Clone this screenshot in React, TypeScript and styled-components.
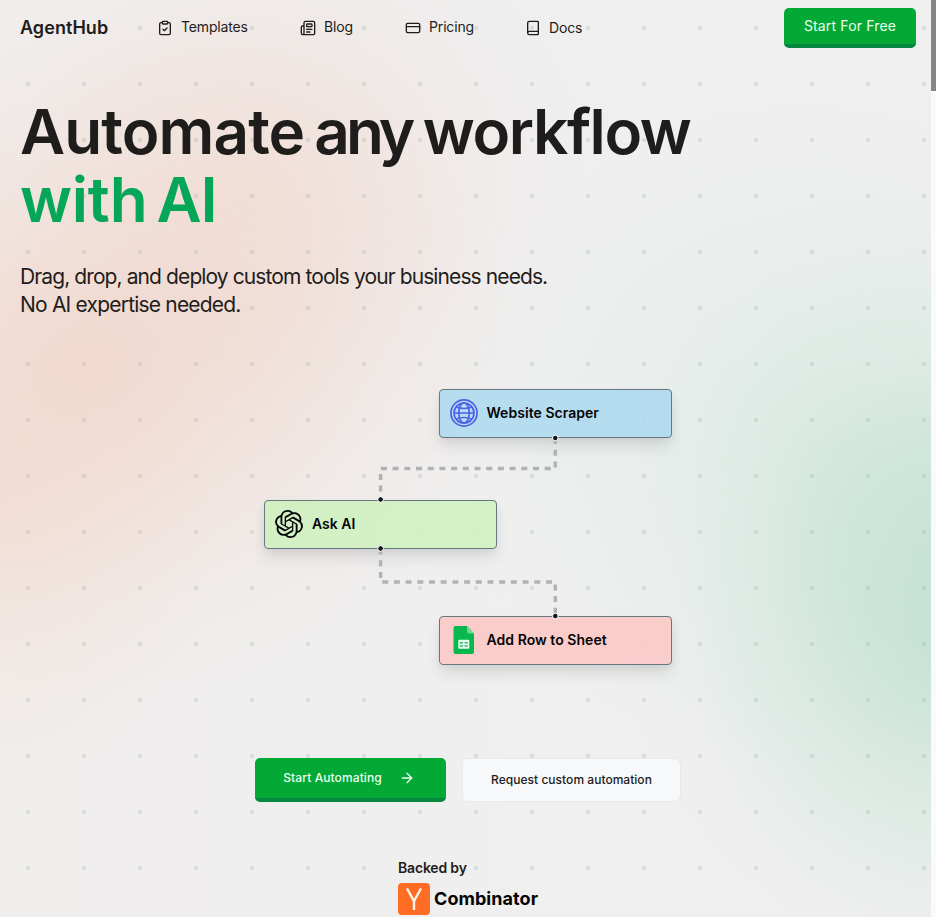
import React from "react";
import styled, { createGlobalStyle } from "styled-components";
import { ClipboardCheck, Newspaper, CreditCard, Book, ArrowRight } from "lucide-react";
import { SiOpenai } from "react-icons/si";

const Global = createGlobalStyle`
  html, body { margin: 0; padding: 0; overflow: hidden; }
  body { font-family: Inter, sans-serif; color: #1f1d1b; }
  * { box-sizing: border-box; }
`;

const Page = styled.div`
  height: 917px;
  display: flex;
  background: #efefef;
`;

const Content = styled.div`
  width: 931px;
  display: flex;
  flex-direction: column;
  overflow: hidden;
  background:
    radial-gradient(circle at center, rgba(90, 125, 110, 0.17) 1.4px, transparent 2.6px) 0 0 / 56px 56px,
    radial-gradient(ellipse 340px 400px at 945px 560px, rgba(176, 220, 197, 0.45), rgba(176, 220, 197, 0.36) 25%, rgba(190, 225, 207, 0.2) 55%, rgba(205, 230, 218, 0.07) 80%, rgba(215, 235, 225, 0)),
    radial-gradient(ellipse 270px 300px at 960px 650px, rgba(176, 221, 198, 0.42), rgba(176, 221, 198, 0.2) 50%, rgba(176, 221, 198, 0)),
    radial-gradient(ellipse 350px 330px at 800px 430px, rgba(206, 232, 220, 0.38), rgba(206, 232, 220, 0.16) 50%, rgba(206, 232, 220, 0)),
    radial-gradient(ellipse 330px 290px at 260px 190px, rgba(242, 205, 190, 0.4), rgba(242, 208, 196, 0.24) 45%, rgba(242, 212, 202, 0.08) 75%, rgba(242, 212, 202, 0)),
    radial-gradient(ellipse 420px 340px at 100px 360px, rgba(243, 196, 176, 0.46), rgba(243, 200, 182, 0.32) 35%, rgba(243, 209, 197, 0.12) 70%, rgba(243, 209, 197, 0)),
    radial-gradient(ellipse 220px 280px at 0 520px, rgba(245, 206, 188, 0.32), rgba(245, 206, 188, 0.14) 50%, rgba(245, 206, 188, 0)),
    linear-gradient(90deg, #f0eeed, #efefef 55%);
`;

const Header = styled.header`
  height: 55px;
  display: flex;
  align-items: center;
  padding: 0 15px 0 20px;
`;

const Brand = styled.div`
  width: 137px;
  font-size: 18px;
  font-weight: 600;
  letter-spacing: 0.05px;
`;

const NavItem = styled.a<{ $width: number; $drop?: number }>`
  width: ${(p) => p.$width}px;
  display: flex;
  align-items: center;
  gap: 8px;
  margin-top: -1px;
  font-size: 14px;
  line-height: 20px;
  letter-spacing: -0.15px;
  svg { margin-top: 2px; }
  span { padding-top: ${(p) => p.$drop ?? 0}px; }
`;

const GreenButton = styled.button<{ $large?: boolean }>`
  width: ${(p) => (p.$large ? 191 : 132)}px;
  height: ${(p) => (p.$large ? 44 : 40)}px;
  display: flex;
  align-items: center;
  justify-content: center;
  gap: 17px;
  padding: 0 ${(p) => (p.$large ? 3 : 0)}px 2px 0;
  border: 0;
  border-bottom: 4px solid #058740;
  border-radius: 5px;
  background: #02a935;
  color: #ecfff0;
  font: ${(p) => (p.$large ? "500 12px" : "400 14px")} Inter, sans-serif;
  letter-spacing: ${(p) => (p.$large ? 0.1 : 0.15)}px;
  svg { margin-top: 1px; }
`;

const HeaderAction = styled.div`
  margin: 1px 0 0 auto;
`;

const Hero = styled.section`
  padding: 43px 20px 0;
`;

const Heading = styled.h1`
  margin: 0;
  font-size: 62px;
  font-weight: 600;
  line-height: 68px;
  white-space: nowrap;
`;

const HeadingLine = styled.span<{ $accent?: boolean }>`
  display: flex;
  color: ${(p) => (p.$accent ? "#05a657" : "inherit")};
`;

const Word = styled.span<{ $tracking: number; $gap?: number }>`
  letter-spacing: ${(p) => p.$tracking}px;
  margin-right: ${(p) => p.$gap ?? 0}px;
`;

const Lead = styled.p`
  margin: 29px 0 0;
  font-size: 21px;
  line-height: 28px;
`;

const LeadLine = styled.span<{ $tracking: number }>`
  display: block;
  letter-spacing: ${(p) => p.$tracking}px;
`;

const Diagram = styled.div`
  position: relative;
  width: 410px;
  height: 280px;
  margin: 69px 0 0 263px;
`;

const Wires = styled.svg`
  position: absolute;
  inset: 0;
`;

const Node = styled.div<{ $x: number; $y: number; $fill: string }>`
  position: absolute;
  left: ${(p) => p.$x}px;
  top: ${(p) => p.$y}px;
  width: 233px;
  height: 49px;
  display: flex;
  align-items: center;
  gap: 9px;
  padding: 0 9.5px 3px;
  border: 1px solid #68777f;
  border-radius: 4px;
  background: ${(p) => p.$fill};
  box-shadow: 0 10px 15px -2px rgba(50, 60, 60, 0.12), 0 3px 6px rgba(50, 60, 60, 0.06);
  color: #050505;
  font-size: 14px;
  font-weight: 600;
  letter-spacing: 0.04px;
  svg { flex: none; margin-top: 2px; }
`;

const Actions = styled.div`
  display: flex;
  gap: 16px;
  margin: 90px 0 0 255px;
`;

const PlainButton = styled.button`
  width: 219px;
  height: 44px;
  padding: 0 0 1px;
  border: 1px solid #e8e9eb;
  border-radius: 6px;
  background: #f7f8fa;
  color: #202020;
  font: 500 12px Inter, sans-serif;
  letter-spacing: 0.03px;
`;

const Backing = styled.div`
  margin: 56px 0 0 398px;
  font-size: 14px;
  line-height: 20px;
  font-weight: 600;
  letter-spacing: -0.18px;
`;

const Combinator = styled.div`
  display: flex;
  align-items: center;
  gap: 4px;
  margin-top: 5px;
  color: #050505;
  font-size: 18px;
  font-weight: 700;
  letter-spacing: 0.06px;
`;

const ScrollTrack = styled.div`
  width: 5px;
  background: #fafafa;
`;

const ScrollThumb = styled.div`
  height: 91px;
  background: #858585;
`;

const GlobeIcon = () => (
  <svg width="28" height="28" viewBox="0 0 28 28" fill="none" stroke="#5060e8" strokeWidth="1.7">
    <circle cx="14" cy="14" r="13.1" />
    <circle cx="14" cy="14" r="10" />
    <ellipse cx="14" cy="14" rx="5.3" ry="10" />
    <path d="M4 14h20M6.3 8q7.7 3 15.4 0M6.3 20q7.7-3 15.4 0" />
  </svg>
);

const SheetIcon = () => (
  <svg width="28" height="28" viewBox="0 0 28 28">
    <path d="M5.5 0H17l7 7.5V26a2 2 0 0 1-2 2H5.5a2 2 0 0 1-2-2V2a2 2 0 0 1 2-2z" fill="#07b851" />
    <path d="M17 0l7 7.5h-5a2 2 0 0 1-2-2z" fill="#75d597" />
    <rect x="8.3" y="13.8" width="11" height="9" rx="1" fill="#e7faed" />
    <path d="M9.8 16.8h3.2M14.6 16.8h3.2M9.8 20h3.2M14.6 20h3.2" stroke="#35bd69" strokeWidth="1.4" />
  </svg>
);

const YIcon = () => (
  <svg width="32" height="32" viewBox="0 0 32 32">
    <rect width="32" height="32" rx="4" fill="#ff6c24" />
    <path d="M9 5.5L16 18l7-12.5M16 18v9" fill="none" stroke="#fff5ec" strokeWidth="2.4" />
  </svg>
);

const joints = [[292.3, 50], [117.6, 111.5], [117.6, 160.5], [292.3, 228]];

export default function App() {
  return (
    <>
      <Global />
      <Page>
        <Content>
          <Header>
            <Brand>AgentHub</Brand>
            <NavItem $width={143}><ClipboardCheck size={16} /><span>Templates</span></NavItem>
            <NavItem $width={105}><Newspaper size={16} /><span>Blog</span></NavItem>
            <NavItem $width={120}><CreditCard size={16} /><span>Pricing</span></NavItem>
            <NavItem $width={70} $drop={2}><Book size={16} /><span>Docs</span></NavItem>
            <HeaderAction><GreenButton>Start For Free</GreenButton></HeaderAction>
          </Header>
          <Hero>
            <Heading>
              <HeadingLine>
                <Word $tracking={-0.9} $gap={10}>Automate</Word>{" "}
                <Word $tracking={-4} $gap={11.5}>any</Word>{" "}
                <Word $tracking={-1.4}>workflow</Word>
              </HeadingLine>
              <HeadingLine $accent>
                <Word $tracking={-0.2} $gap={9}>with</Word>{" "}
                <Word $tracking={-1}>AI</Word>
              </HeadingLine>
            </Heading>
            <Lead>
              <LeadLine $tracking={-0.9}>Drag, drop, and deploy custom tools your business needs.</LeadLine>
              <LeadLine $tracking={-0.8}>No AI expertise needed.</LeadLine>
            </Lead>
          </Hero>
          <Diagram>
            <Node $x={176} $y={1} $fill="rgba(171,217,239,0.86)"><GlobeIcon />Website Scraper</Node>
            <Node $x={1.4} $y={112} $fill="rgba(207,241,193,0.9)"><SiOpenai size={28} />Ask AI</Node>
            <Node $x={176} $y={228} $fill="rgba(251,201,199,0.9)"><SheetIcon />Add Row to Sheet</Node>
            <Wires width="410" height="280" viewBox="0 0 410 280">
              <g fill="none" stroke="#b1b3b3" strokeWidth="3.5" strokeDasharray="6 5.7">
                <path d="M292.3 50V80.5H117.6V111.5" />
                <path d="M117.6 160.5V194H292.3V228" />
              </g>
              {joints.map(([x, y]) => <circle key={`${x}-${y}`} cx={x} cy={y} r="2.8" fill="#11181c" stroke="#fff" strokeWidth="1" />)}
            </Wires>
          </Diagram>
          <Actions>
            <GreenButton $large>Start Automating<ArrowRight size={16} /></GreenButton>
            <PlainButton>Request custom automation</PlainButton>
          </Actions>
          <Backing>
            Backed by
            <Combinator><YIcon />Combinator</Combinator>
          </Backing>
        </Content>
        <ScrollTrack><ScrollThumb /></ScrollTrack>
      </Page>
    </>
  );
}
